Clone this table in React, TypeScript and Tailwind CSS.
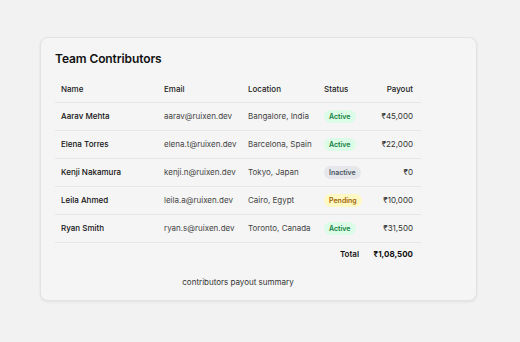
import React from "react";

const rows = [
  { name: "Aarav Mehta", email: "aarav@ruixen.dev", loc: "Bangalore, India", status: "Active", pay: "₹45,000" },
  { name: "Elena Torres", email: "elena.t@ruixen.dev", loc: "Barcelona, Spain", status: "Active", pay: "₹22,000" },
  { name: "Kenji Nakamura", email: "kenji.n@ruixen.dev", loc: "Tokyo, Japan", status: "Inactive", pay: "₹0" },
  { name: "Leila Ahmed", email: "leila.a@ruixen.dev", loc: "Cairo, Egypt", status: "Pending", pay: "₹10,000" },
  { name: "Ryan Smith", email: "ryan.s@ruixen.dev", loc: "Toronto, Canada", status: "Active", pay: "₹31,500" },
];

function Badge({ s }: { s: string }) {
  const cls =
    s === "Active"
      ? "bg-[#dcfce7] text-[#15803d]"
      : s === "Inactive"
      ? "bg-[#e5e7eb] text-[#4b5563]"
      : "bg-[#fef9c3] text-[#a16207]";
  return (
    <span className={`inline-flex items-center h-[13px] px-[5px] rounded-full text-[7px] font-semibold leading-none ${cls}`}>
      {s}
    </span>
  );
}

export default function App() {
  return (
    <div className="w-[520px] h-[342px] bg-[#f2f2f2] pt-[37px] pl-[40px]" style={{ fontFamily: "Inter, 'Noto Sans', sans-serif" }}>
      <div className="w-[437px] h-[264px] bg-[#f5f5f5] border border-[#e3e3e3] rounded-[8px] shadow-[0_1px_3px_rgba(0,0,0,0.08)] pt-[13px] px-[14px]">
        <h2 className="text-[12px] leading-[16px] font-semibold text-[#111] tracking-[-0.1px]">Team Contributors</h2>
        <table className="mt-[9px] w-[366px] table-fixed border-collapse text-[8px] text-[#222]">
          <colgroup>
            <col className="w-[103px]" />
            <col className="w-[84px]" />
            <col className="w-[76px]" />
            <col className="w-[47px]" />
            <col className="w-[56px]" />
          </colgroup>
          <thead>
            <tr className="h-[26px] border-b border-[#e6e6e6]">
              <th className="text-left font-medium pl-[6px]">Name</th>
              <th className="text-left font-medium pl-[6px]">Email</th>
              <th className="text-left font-medium pl-[6px]">Location</th>
              <th className="text-left font-medium pl-[6px]">Status</th>
              <th className="text-right font-medium pr-[8px]">Payout</th>
            </tr>
          </thead>
          <tbody>
            {rows.map((r) => (
              <tr key={r.name} className="h-[28px] border-b border-[#e6e6e6]">
                <td className="pl-[6px] font-medium text-[#111]">{r.name}</td>
                <td className="pl-[6px] text-[#444]">{r.email}</td>
                <td className="pl-[6px] text-[#444]">{r.loc}</td>
                <td className="pl-[6px]"><Badge s={r.status} /></td>
                <td className="pr-[8px] text-right text-[#333]">{r.pay}</td>
              </tr>
            ))}
            <tr className="h-[24px]">
              <td colSpan={3}></td>
              <td className="text-right font-semibold text-[#111] pr-[6px]">Total</td>
              <td className="pr-[8px] text-right font-bold text-[#111]">₹1,08,500</td>
            </tr>
          </tbody>
        </table>
        <p className="mt-[10px] w-[366px] text-center text-[8px] text-[#333]">contributors payout summary</p>
      </div>
    </div>
  );
}
